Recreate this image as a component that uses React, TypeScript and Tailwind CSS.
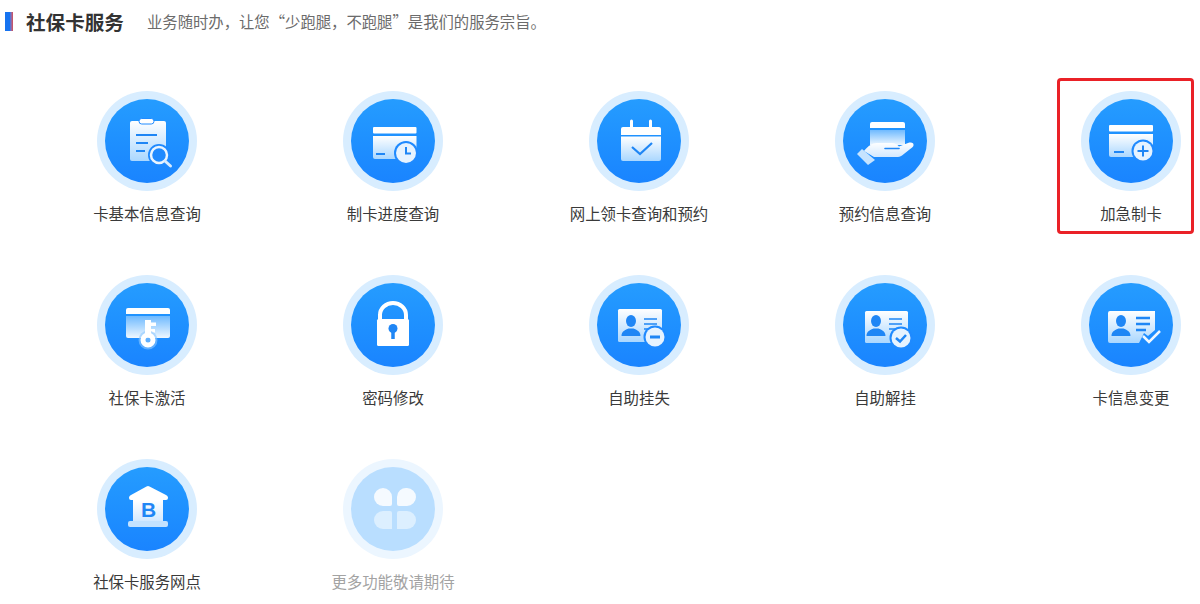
import React from "react";

const FONT = { fontFamily: '"Noto Sans CJK SC", "Noto Sans", sans-serif' };
const DARK = "#1f86f5";
const BG = "#1f8aff";

function Defs({ id }: { id: string }) {
  return (
    <defs>
      <linearGradient id={`${id}a`} x1="0" y1="0" x2="0" y2="1">
        <stop offset="0" stopColor="#ffffff" />
        <stop offset="1" stopColor="#aad7ff" />
      </linearGradient>
      <linearGradient id={`${id}b`} x1="0" y1="0" x2="0" y2="1">
        <stop offset="0" stopColor="#6fbaff" />
        <stop offset="1" stopColor="#eef7ff" />
      </linearGradient>
      <linearGradient id={`${id}c`} x1="0" y1="0" x2="0" y2="1">
        <stop offset="0" stopColor="#ffffff" />
        <stop offset="1" stopColor="#d3e9ff" />
      </linearGradient>
    </defs>
  );
}

function Person({ x, y }: { x: number; y: number }) {
  return (
    <g fill={DARK}>
      <ellipse cx={x} cy={y} rx="5" ry="6" />
      <path d={`M${x - 9.5} ${y + 15}c0-5 4-6 7-7.500h5c3 1.500 7 2.500 7 7.500z`} />
    </g>
  );
}

const icons: Record<string, (id: string) => React.ReactNode> = {
  clipboard: (id) => (
    <>
      <rect x="25" y="22" width="36" height="40" rx="2" fill={`url(#${id}a)`} />
      <rect x="34" y="19.500" width="15" height="5.500" rx="2.700" fill="#fff" stroke={BG} strokeWidth="1" />
      <g stroke={DARK} strokeWidth="2">
        <path d="M31 36h21M31 44h12M31 52h9" />
      </g>
      <circle cx="54" cy="56" r="11" fill={BG} />
      <circle cx="54" cy="56" r="8" fill={BG} stroke="#eaf5ff" strokeWidth="2.500" />
      <path d="M60 62l5.500 5" stroke="#d8ecff" strokeWidth="3" strokeLinecap="round" />
    </>
  ),
  clock: (id) => (
    <>
      <rect x="22" y="28" width="43.500" height="6.500" rx="1" fill="#fff" />
      <path d="M22 37h43.500v21a2 2 0 0 1-2 2H24a2 2 0 0 1-2-2z" fill={`url(#${id}a)`} />
      <path d="M25 55h9" stroke={DARK} strokeWidth="1.800" />
      <circle cx="55" cy="54" r="12" fill={BG} />
      <circle cx="55" cy="54" r="10" fill="#e6f3ff" />
      <path d="M55 48v6.500h5" fill="none" stroke={DARK} strokeWidth="2" />
    </>
  ),
  calendar: (id) => (
    <>
      <path d="M34.500 22v6M53.500 22v6" stroke="#fff" strokeWidth="3" strokeLinecap="round" />
      <path d="M26 28h36a2 2 0 0 1 2 2v6H24v-6a2 2 0 0 1 2-2z" fill="#fff" />
      <path d="M24 37.500h40V60a2 2 0 0 1-2 2H26a2 2 0 0 1-2-2z" fill={`url(#${id}a)`} />
      <path d="M35 48l8 7 12-11" fill="none" stroke={DARK} strokeWidth="2.200" />
    </>
  ),
  hand: (id) => (
    <>
      <path d="M29 23h31a2 2 0 0 1 2 2v4H27v-4a2 2 0 0 1 2-2z" fill="#fff" />
      <path d="M27 31h35v15H27z" fill={`url(#${id}b)`} />
      <path
        d="M21 52C25 47 29 44 34 44h15c3 0 5 1.500 7 3.500l9-3.500c3-1 6-.5 5.500 2.500-.4 1.500-1.500 2.200-3 3.300L59 56.500c-2 1.500-3 1.500-6 1.500H31z"
        fill={`url(#${id}c)`}
      />
      <path d="M42 49.500h14" stroke={DARK} strokeWidth="1.600" strokeLinecap="round" />
      <path d="M14 55l5-5 13 11-7 5z" fill="#c6e3ff" />
    </>
  ),
  plus: (id) => (
    <>
      <rect x="20" y="26" width="44" height="6.500" rx="1" fill="#fff" />
      <path d="M20 35h44v21a2 2 0 0 1-2 2H22a2 2 0 0 1-2-2z" fill={`url(#${id}a)`} />
      <path d="M25 53h10" stroke={DARK} strokeWidth="1.800" />
      <circle cx="54" cy="52" r="11.500" fill={BG} />
      <circle cx="54" cy="52" r="9.500" fill="#e6f3ff" />
      <path d="M54 46.500v11M48.500 52h11" stroke={DARK} strokeWidth="2" />
    </>
  ),
  key: (id) => (
    <>
      <path d="M23 25h40a2 2 0 0 1 2 2v4H21v-4a2 2 0 0 1 2-2z" fill="#fff" />
      <path d="M21 33h44v20a2 2 0 0 1-2 2H23a2 2 0 0 1-2-2z" fill={`url(#${id}b)`} />
      <path d="M40 37h6v2.500h5v3.500h-5v3h4v3.500h-4V54h-6z" fill="#fff" />
      <circle cx="43" cy="57" r="9.500" fill="#8ec8ff" opacity="0.600" />
      <circle cx="43" cy="57" r="5" fill="none" stroke="#fff" strokeWidth="5" />
      <path d="M40 44h6v9h-6z" fill="#fff" />
    </>
  ),
  lock: () => (
    <>
      <path d="M29 38V32a13 12 0 0 1 26 0v6" fill="none" stroke="#fff" strokeWidth="4" />
      <rect x="26" y="36" width="32" height="27" rx="1.500" fill="#fff" />
      <circle cx="42" cy="45.500" r="4.500" fill={DARK} />
      <path d="M42 47v9" stroke={DARK} strokeWidth="3.500" />
    </>
  ),
  minus: (id) => (
    <>
      <rect x="21" y="26" width="44" height="33" rx="1.500" fill={`url(#${id}a)`} />
      <Person x={34} y={38} />
      <path d="M47 36h13M47 41h13M47 46h9" stroke={DARK} strokeWidth="1.600" />
      <circle cx="58" cy="54" r="11.500" fill={BG} />
      <circle cx="58" cy="54" r="9.500" fill="#e6f3ff" />
      <path d="M53 54h10" stroke={DARK} strokeWidth="3" />
    </>
  ),
  okCircle: (id) => (
    <>
      <rect x="22" y="28" width="43" height="32" rx="1.500" fill={`url(#${id}a)`} />
      <Person x={33} y={38} />
      <path d="M46 36h13M46 41h13M46 46h9" stroke={DARK} strokeWidth="1.600" />
      <circle cx="58" cy="55" r="11.500" fill={BG} />
      <circle cx="58" cy="55" r="9.500" fill="#e6f3ff" />
      <path d="M53 55l4 3.500 6-6.500" fill="none" stroke={DARK} strokeWidth="2.500" />
    </>
  ),
  okCheck: (id) => (
    <>
      <path d="M21 28h45v19l-7 6-4-3-5 10H21a2 2 0 0 1-2-2V30a2 2 0 0 1 2-2z" fill={`url(#${id}a)`} />
      <Person x={32} y={38} />
      <path d="M47 35h14M47 41h14M47 47h10" stroke={DARK} strokeWidth="2.400" />
      <path d="M54 53l6 6 11-11" fill="none" stroke="#eef7ff" strokeWidth="2.500" />
    </>
  ),
  bank: (id) => (
    <>
      <path d="M41.500 19.500a2.500 2.500 0 0 1 3 0L61 28a3 3 0 0 1 2 2.500V31a2 2 0 0 1-2 2H26a2 2 0 0 1-2-2v-.5a3 3 0 0 1 2-2.500z" fill="#fff" />
      <path d="M28 33h30v21H28z" fill={`url(#${id}c)`} />
      <path d="M23 56a2 2 0 0 1 2-2h36a2 2 0 0 1 2 2v2a2 2 0 0 1-2 2H25a2 2 0 0 1-2-2z" fill="#c3e2ff" />
      <text
        x="43.500"
        y="50"
        textAnchor="middle"
        fontSize="21"
        fontWeight="700"
        fill={DARK}
        fontFamily='"Liberation Sans", sans-serif'
      >
        B
      </text>
    </>
  ),
  clover: () => (
    <>
      <path d="M32 21a9 9 0 0 1 9 9v7a2 2 0 0 1-2 2h-7a9 9 0 0 1 0-18z" fill="#f5faff" />
      <path d="M56 21a9 9 0 0 1 0 18h-8a2 2 0 0 1-2-2v-7a9 9 0 0 1 10-9z" fill="#f5faff" />
      <path d="M32 44h7a2 2 0 0 1 2 2v16h-9a9 9 0 0 1 0-18z" fill="#dcefff" />
      <path d="M48 44h8a9 9 0 0 1 0 18H46V46a2 2 0 0 1 2-2z" fill="#dcefff" />
    </>
  ),
};

function Item({
  icon,
  label,
  muted = false,
  boxed = false,
}: {
  icon: string;
  label: string;
  muted?: boolean;
  boxed?: boolean;
}) {
  return (
    <div className="relative flex w-[100px] flex-col items-center">
      {boxed && (
        <div className="absolute -top-[13px] -left-[24px] h-[156px] w-[137px] rounded-[4px] border-[3px] border-[#ea2127]" />
      )}
      <div
        className={`flex h-[100px] w-[100px] items-center justify-center rounded-full ${
          muted ? "bg-[#ecf6ff]" : "bg-[#d8edff]"
        }`}
      >
        <div
          className={`h-[84px] w-[84px] overflow-hidden rounded-full ${
            muted ? "bg-[#b9deff]" : "bg-linear-to-b from-[#259cff] to-[#1a84ff]"
          }`}
        >
          <svg viewBox="0 0 84 84" width="84" height="84">
            <Defs id={icon} />
            {icons[icon](icon)}
          </svg>
        </div>
      </div>
      <div
        className={`mt-[11px] text-[15.400px] leading-[22px] whitespace-nowrap ${
          muted ? "text-[#a3a3a3]" : "text-[#3a3a3a]"
        }`}
      >
        {label}
      </div>
    </div>
  );
}

const items = [
  { icon: "clipboard", label: "卡基本信息查询" },
  { icon: "clock", label: "制卡进度查询" },
  { icon: "calendar", label: "网上领卡查询和预约" },
  { icon: "hand", label: "预约信息查询" },
  { icon: "plus", label: "加急制卡", boxed: true },
  { icon: "key", label: "社保卡激活" },
  { icon: "lock", label: "密码修改" },
  { icon: "minus", label: "自助挂失" },
  { icon: "okCircle", label: "自助解挂" },
  { icon: "okCheck", label: "卡信息变更" },
  { icon: "bank", label: "社保卡服务网点" },
  { icon: "clover", label: "更多功能敬请期待", muted: true },
];

export default function App() {
  return (
    <div className="h-[604px] w-[1200px] overflow-hidden bg-white" style={FONT}>
      <div className="flex h-[43px] items-center pl-[5px]">
        <div className="h-[19px] w-[8px] bg-linear-to-r from-[#1673f0] from-60% to-[#d9434f]" />
        <div className="ml-[13px] text-[19.600px] font-bold text-[#333333]">社保卡服务</div>
        <div className="ml-[23px] text-[15.350px] text-[#6b6b6b]">
          业务随时办，让您“少跑腿，不跑腿”是我们的服务宗旨。
        </div>
      </div>
      <div className="mt-[48px] grid grid-cols-[repeat(5,100px)] gap-x-[146px] gap-y-[51px] pl-[97px]">
        {items.map((it) => (
          <Item key={it.icon} {...it} />
        ))}
      </div>
    </div>
  );
}
